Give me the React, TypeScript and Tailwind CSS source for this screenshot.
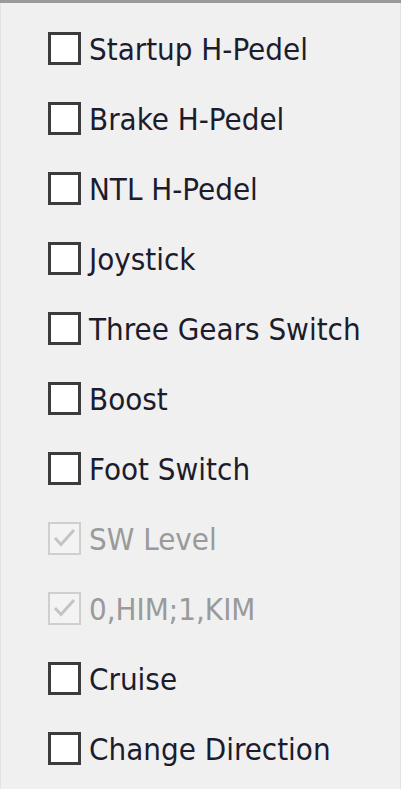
import React from "react";

type Item = { label: string; checked?: boolean; disabled?: boolean };

const items: Item[] = [
  { label: "Startup H-Pedel" },
  { label: "Brake H-Pedel" },
  { label: "NTL H-Pedel" },
  { label: "Joystick" },
  { label: "Three Gears Switch" },
  { label: "Boost" },
  { label: "Foot Switch" },
  { label: "SW Level", checked: true, disabled: true },
  { label: "0,HIM;1,KIM", checked: true, disabled: true },
  { label: "Cruise" },
  { label: "Change Direction" },
];

function Box({ checked, disabled }: { checked?: boolean; disabled?: boolean }) {
  return (
    <div
      className={
        disabled
          ? "w-[33px] h-[33px] shrink-0 border-[2px] border-[#cfcfcf] bg-[#f3f3f3] flex items-center justify-center"
          : "w-[33px] h-[33px] shrink-0 border-[3px] border-[#3c3c3c] bg-white"
      }
    >
      {checked && (
        <svg width="27" height="27" viewBox="0 0 27 27">
          <polyline
            points="4,13 10,19.5 23,5"
            fill="none"
            stroke="#c4c4c4"
            strokeWidth="3"
          />
        </svg>
      )}
    </div>
  );
}

export default function App() {
  return (
    <div
      className="w-[401px] h-[789px] bg-[#f0f0f0] border-t-[3px] border-[#9a9a9a] overflow-hidden"
      style={{ fontFamily: '"DejaVu Sans Condensed", "DejaVu Sans", sans-serif' }}
    >
      <div className="h-full border-l border-r border-[#e2e2e2] pt-[10px] pl-[47px] flex flex-col">
        {items.map((it) => (
          <div key={it.label} className="h-[70px] flex items-center gap-[8px]">
            <Box checked={it.checked} disabled={it.disabled} />
            <span
              className={
                it.disabled
                  ? "text-[31px] leading-none text-[#9a9a9a] pt-[2px]"
                  : "text-[31px] leading-none text-[#1c1c2c] pt-[2px]"
              }
            >
              {it.label}
            </span>
          </div>
        ))}
      </div>
    </div>
  );
}
